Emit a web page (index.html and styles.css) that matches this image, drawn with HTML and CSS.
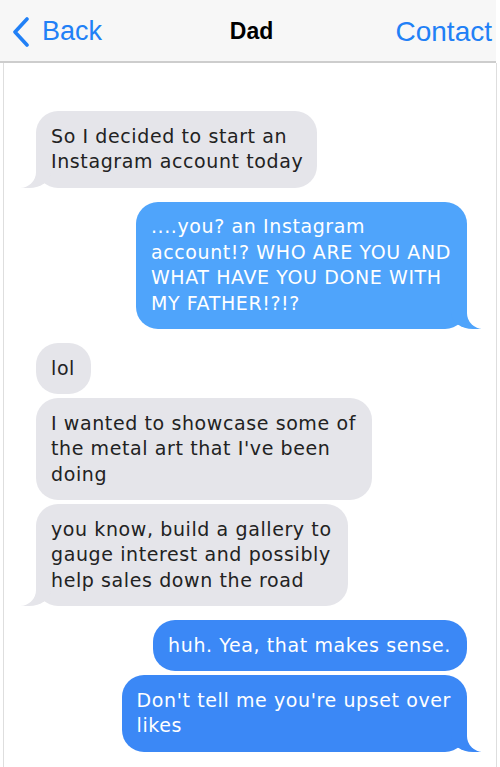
FILE: index.html
```html
<!DOCTYPE html>
<html lang="en">
<head>
<meta charset="utf-8">
<title>Dad</title>
<link rel="stylesheet" href="styles.css">
</head>
<body>
<div class="page">
  <header class="nav">
    <a class="nav-back" href="#">
      <svg class="chev" width="20" height="30" viewBox="0 0 20 30" aria-hidden="true">
        <path d="M16 2 L4 15 L16 28" fill="none" stroke="#2180f6" stroke-width="3.6" stroke-linecap="round" stroke-linejoin="round"/>
      </svg>
      <span>Back</span>
    </a>
    <h1 class="nav-title">Dad</h1>
    <a class="nav-contact" href="#">Contact</a>
  </header>
  <main class="chat">
    <div class="bubble them tail wide">So I decided to start an<br>Instagram account today</div>
    <div class="bubble me light tail group">....you? an Instagram<br>account!? WHO ARE YOU AND<br>WHAT HAVE YOU DONE WITH<br>MY FATHER!?!?</div>
    <div class="bubble them group">lol</div>
    <div class="bubble them">I wanted to showcase some of<br>the metal art that I've been<br>doing</div>
    <div class="bubble them tail">you know, build a gallery to<br>gauge interest and possibly<br>help sales down the road</div>
    <div class="bubble me group">huh. Yea, that makes sense.</div>
    <div class="bubble me tail">Don't tell me you're upset over<br>likes</div>
  </main>
</div>
</body>
</html>
```

FILE: styles.css
```css
html, body {
  margin: 0;
  padding: 0;
  background: #ffffff;
}

.page {
  width: 500px;
  height: 767px;
  overflow: hidden;
  display: flex;
  flex-direction: column;
}

.nav {
  flex: none;
  height: 63px;
  box-sizing: border-box;
  background: #f7f7f7;
  border-bottom: 2px solid #cdcdcd;
  margin-right: 4px;
  display: grid;
  grid-template-columns: 1fr auto 1fr;
  align-items: center;
  padding: 2px 4px 0 11px;
  font-family: "Liberation Sans", Arial, sans-serif;
}

.nav a {
  color: #2180f6;
  text-decoration: none;
  font-size: 27px;
}

.nav-back {
  display: flex;
  align-items: center;
  gap: 11px;
  justify-self: start;
}

.chev {
  display: block;
}

.nav-title {
  margin: 0;
  font-size: 23px;
  font-weight: bold;
  color: #000;
}

.nav .nav-contact {
  justify-self: end;
  font-size: 28px;
}

.chat {
  flex: 1;
  margin-left: 3px;
  margin-right: 3px;
  border-left: 1px solid #dedede;
  border-right: 1px solid #dedede;
  padding: 48px 29px 0 32px;
  display: flex;
  flex-direction: column;
  gap: 4px;
  font-family: "DejaVu Sans", Verdana, sans-serif;
  font-size: 19px;
  letter-spacing: 0.6px;
  line-height: 25.5px;
}

.bubble {
  position: relative;
  padding: 12.5px 16px 13px 15px;
  border-radius: 22px;
  max-width: 380px;
  white-space: nowrap;
}

.bubble.wide {
  padding-right: 14px;
}

.bubble.group {
  margin-top: 10px;
}

.them {
  align-self: flex-start;
  background: #e5e5ea;
  color: #222222;
}

.me {
  align-self: flex-end;
  background: #3b88f6;
  color: #ffffff;
}

.me.light {
  background: #4fa4fb;
}

.tail::before,
.tail::after {
  content: "";
  position: absolute;
  bottom: 0;
}

.them.tail::before {
  left: -15px;
  width: 30px;
  height: 24px;
  background: #e5e5ea;
  border-bottom-right-radius: 22px 16px;
}

.them.tail::after {
  left: -22px;
  width: 22px;
  height: 26px;
  background: #ffffff;
  border-bottom-right-radius: 16px;
}

.me.tail::before {
  right: -14px;
  width: 30px;
  height: 24px;
  background: inherit;
  border-bottom-left-radius: 22px 16px;
}

.me.tail::after {
  right: -22px;
  width: 22px;
  height: 26px;
  background: #ffffff;
  border-bottom-left-radius: 16px;
}
```
